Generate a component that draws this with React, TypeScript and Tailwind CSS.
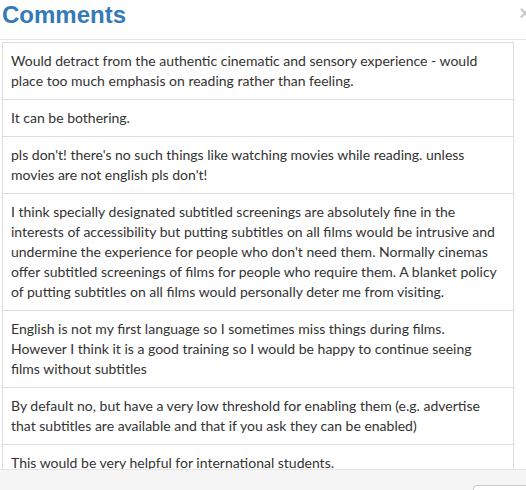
import React from "react";

// "\n" marks where the reference wraps a line that this font would otherwise fit
const comments: string[] = [
  "Would detract from the authentic cinematic and sensory experience - would place too much emphasis on reading rather than feeling.",
  "It can be bothering.",
  "pls don't! there's no such things like watching movies while reading. unless movies are not english pls don't!",
  "I think specially designated subtitled screenings are absolutely fine in the interests of accessibility but putting subtitles on all films would be intrusive and undermine the experience for people who don't need them. Normally cinemas offer subtitled screenings of films for people who require them. A blanket policy of putting subtitles on all films would personally deter me from visiting.",
  "English is not my first language so I sometimes miss things during films.\nHowever I think it is a good training so I would be happy to continue seeing\nfilms without subtitles",
  "By default no, but have a very low threshold for enabling them (e.g. advertise that subtitles are available and that if you ask they can be enabled)",
  "This would be very helpful for international students.",
];

export default function App() {
  return (
    <div className="relative h-[490px] w-[526px] overflow-hidden bg-white">
      {/* header */}
      <div className="h-[40px] border-b border-[#e5e5e5]">
        <h2 className="pl-[2px] pt-[2px] font-['Liberation_Sans',Arial,sans-serif] text-[24px] font-bold leading-[26px] text-[#337ab7]">
          Comments
        </h2>
      </div>
      <button
        type="button"
        className="absolute left-[519px] top-[2px] font-['Liberation_Sans',Arial,sans-serif] text-[21px] font-bold leading-none text-black opacity-20"
      >
        ×
      </button>

      {/* body */}
      <div className="h-[429px] overflow-hidden pt-[2px]">
        <ul className="ml-[2px] w-[512px] border-x border-t border-[#ddd] font-['Lato',sans-serif] text-[14px] leading-[20px] text-[#333]">
          {comments.map((c) => (
            <li key={c} className="whitespace-pre-line border-b border-[#ddd] px-2 py-2">
              {c}
            </li>
          ))}
        </ul>
      </div>

      {/* footer */}
      <div className="h-[21px] border-t border-[#e5e5e5] bg-[#f5f5f5] pl-[473px] pt-[15px]">
        <div className="h-[20px] w-[80px] rounded-[4px] border border-[#ccc] bg-white" />
      </div>
    </div>
  );
}
